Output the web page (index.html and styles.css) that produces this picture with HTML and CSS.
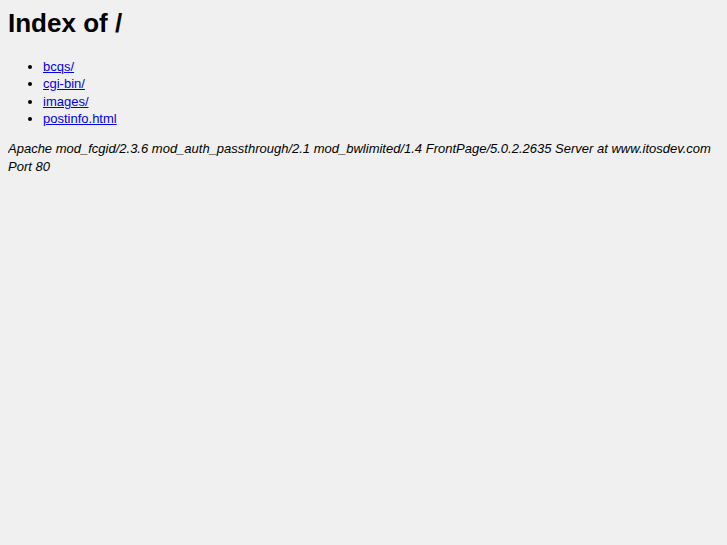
FILE: index.html
```html
<!DOCTYPE html>
<html lang="en">
<head>
  <meta charset="UTF-8">
  <title>Index of /</title>
  <link rel="stylesheet" href="styles.css">
</head>
<body>
  <h1>Index of /</h1>
  <ul>
    <li><a href="bcqs/">bcqs/</a></li>
    <li><a href="cgi-bin/">cgi-bin/</a></li>
    <li><a href="images/">images/</a></li>
    <li><a href="postinfo.html">postinfo.html</a></li>
  </ul>
  <address>Apache mod_fcgid/2.3.6 mod_auth_passthrough/2.1 mod_bwlimited/1.4 FrontPage/5.0.2.2635 Server at www.itosdev.com Port 80</address>
</body>
</html>
```

FILE: styles.css
```css
body {
  margin: 8px;
  background: #f0f0f0;
  color: #000;
  font-family: "Liberation Sans", Arial, sans-serif;
  font-size: 13px;
}

h1 {
  font-size: 26px;
  line-height: 30px;
  margin: 0 0 20px;
}

ul {
  margin: 0 0 13px;
  padding-left: 35px;
}

li {
  line-height: 17.3px;
}

a {
  color: #0000ee;
}

address {
  font-style: italic;
  line-height: 18px;
}
```
